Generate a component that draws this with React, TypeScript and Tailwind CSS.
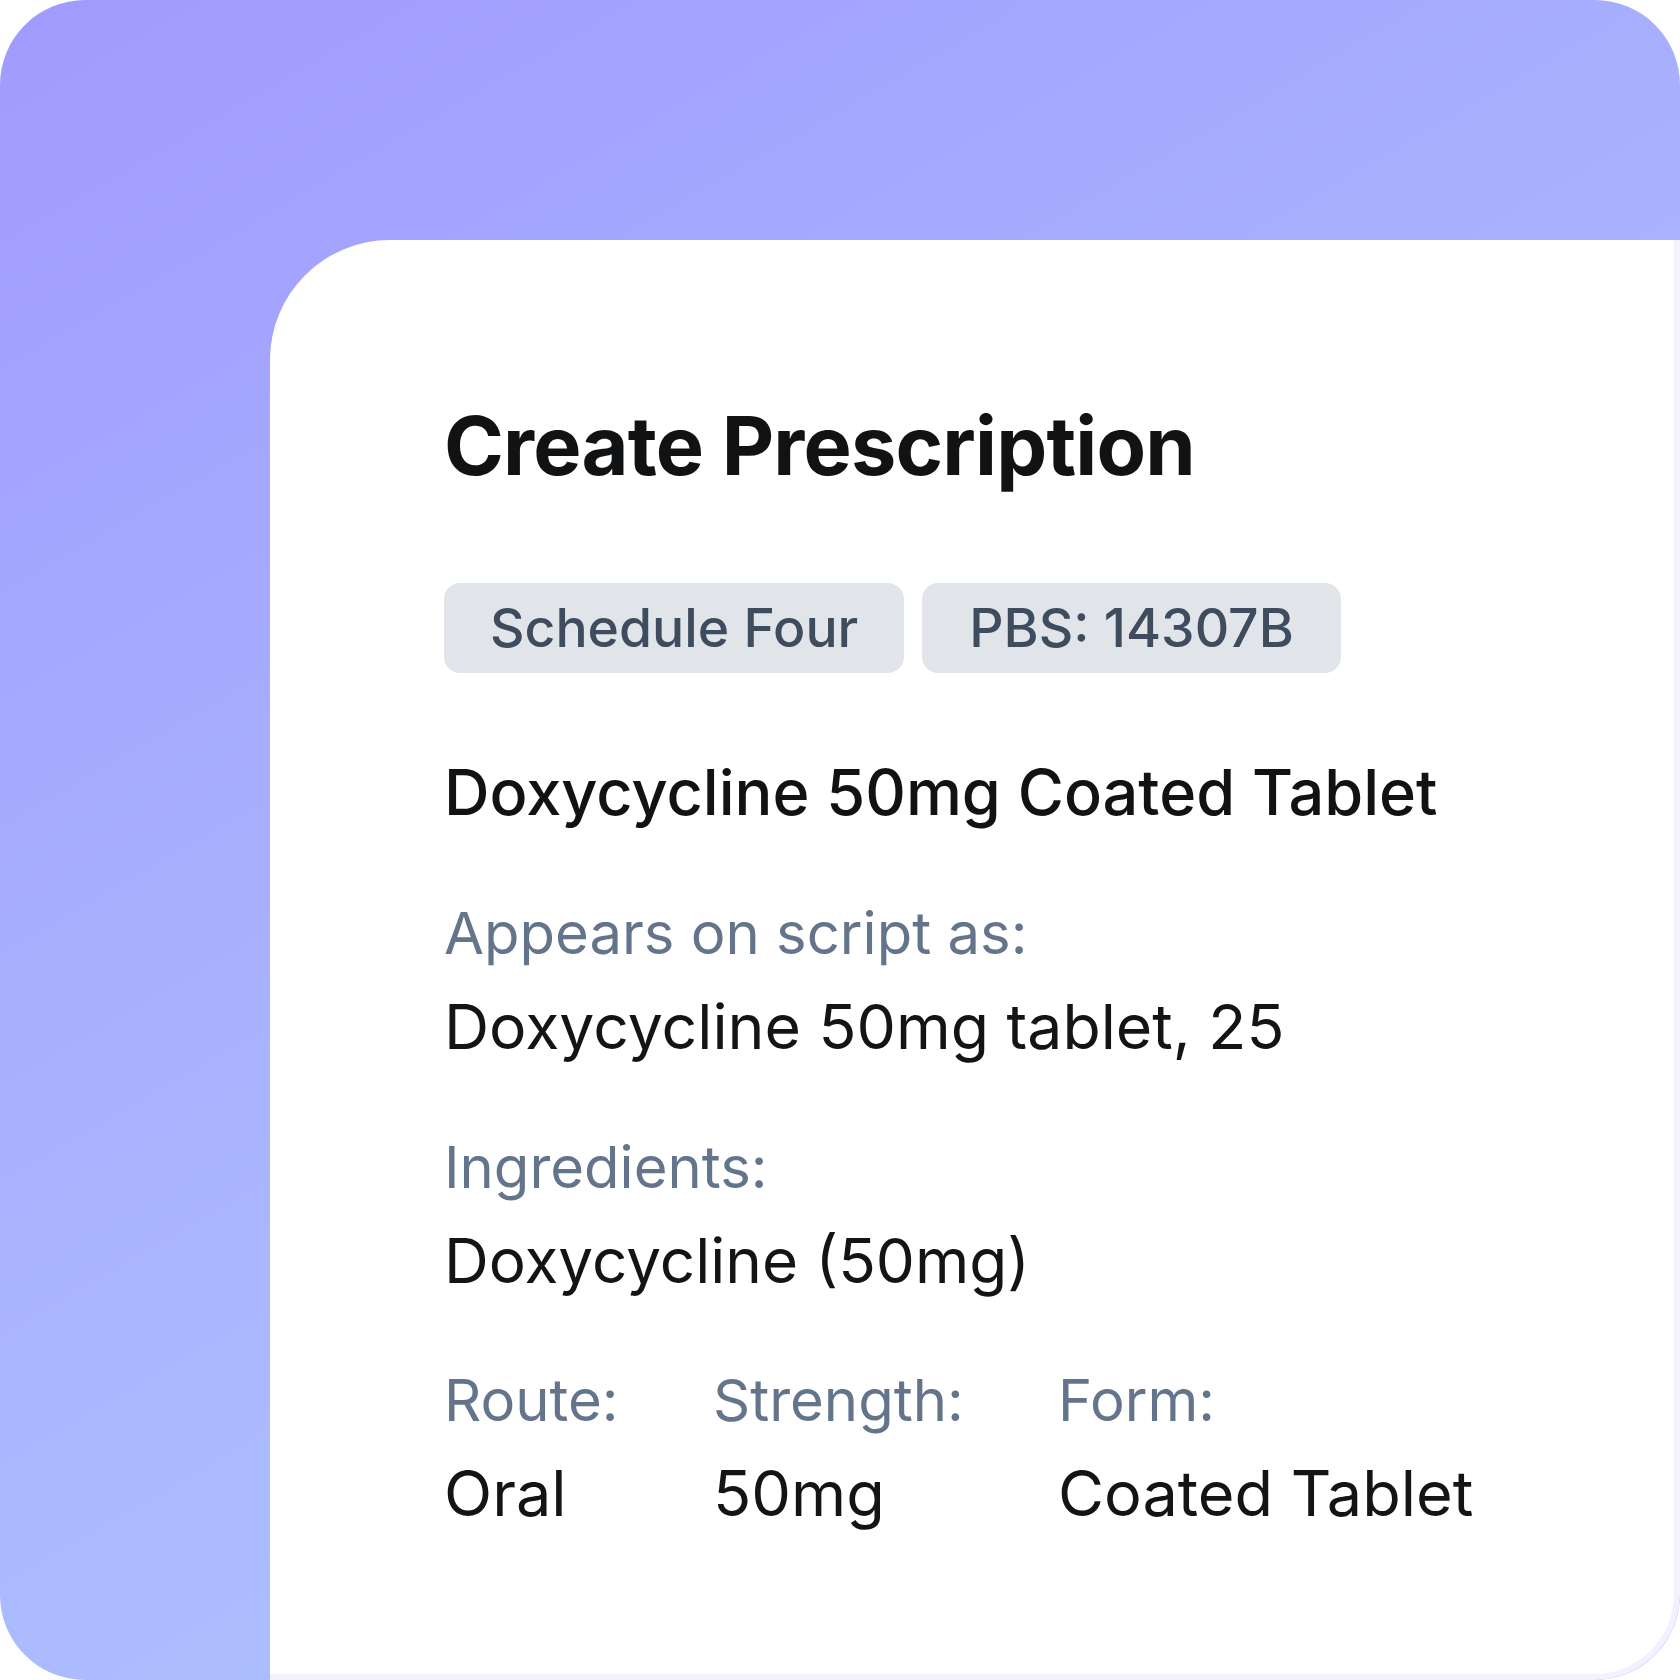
import React from 'react';

const fields = [
  { label: 'Route:', value: 'Oral', width: 'w-[269px]' },
  { label: 'Strength:', value: '50mg', width: 'w-[345px]' },
  { label: 'Form:', value: 'Coated Tablet', width: 'w-auto' },
];

const App: React.FC = () => {
  return (
    <div className="w-[1680px] h-[1680px] bg-white font-['Inter','Noto_Sans',sans-serif]">
      <div className="w-full h-full rounded-[85px] overflow-hidden flex pt-[240px] pl-[270px] bg-[linear-gradient(150deg,#a19afe_0%,#a8b0fe_40%,#b1cbfd_100%)]">
        <div className="flex-1 bg-white rounded-tl-[120px] rounded-br-[86px] border-r-[6px] border-b-[6px] border-[#f3f1fe] pl-[174px] pt-[166px]">
          <h1 className="text-[81px] leading-none font-bold text-[#111214] tracking-[-0.01em]">
            Create Prescription
          </h1>

          <div className="flex gap-[18px] mt-[96px]">
            <span className="h-[90px] px-[46px] flex items-center rounded-[16px] bg-[#e1e5ea] text-[#3e4c5d] text-[53.5px] font-medium">
              Schedule Four
            </span>
            <span className="h-[90px] px-[47px] flex items-center rounded-[16px] bg-[#e1e5ea] text-[#3e4c5d] text-[53.5px] font-medium">
              PBS: 14307B
            </span>
          </div>

          <div className="mt-[72px] leading-[95px] text-[63px]">
            <p className="font-medium text-[#121212]">Doxycycline 50mg Coated Tablet</p>

            <p className="mt-[48px] text-[58px] leading-[91px] text-[#64748b]">Appears on script as:</p>
            <p className="text-[62.5px] text-[#141414]">Doxycycline 50mg tablet, 25</p>

            <p className="mt-[48px] text-[58px] leading-[91px] text-[#64748b]">Ingredients:</p>
            <p className="text-[62px] text-[#141414]">Doxycycline (50mg)</p>

            <div className="mt-[47px] flex">
              {fields.map((f) => (
                <div key={f.label} className={f.width}>
                  <p className="text-[58px] leading-[91px] text-[#64748b]">{f.label}</p>
                  <p className="text-[#141414]">{f.value}</p>
                </div>
              ))}
            </div>
          </div>
        </div>
      </div>
    </div>
  );
};

export default App;
